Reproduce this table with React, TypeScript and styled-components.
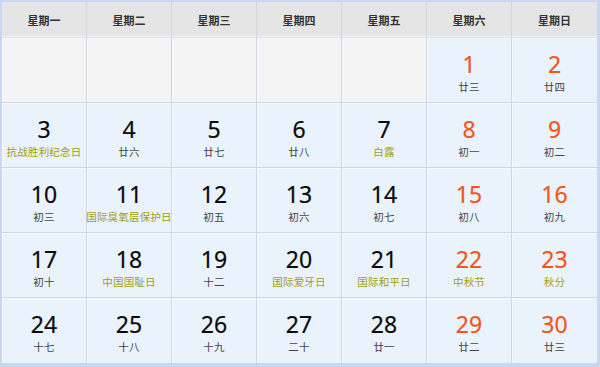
import React from 'react';
import styled, { createGlobalStyle } from 'styled-components';

const GlobalStyle = createGlobalStyle`
  html, body {
    margin: 0;
    padding: 0;
    background: #ffffff;
  }
  * {
    box-sizing: border-box;
  }
`;

const Calendar = styled('div')`
  width: 600px;
  height: 367px;
  display: grid;
  grid-template-columns: repeat(7, 85px);
  grid-template-rows: 36px repeat(5, 65px);
  border-style: solid;
  border-color: #cad8ef;
  border-width: 2px 3px 4px 2px;
  background: #eaf2fb;
  font-family: 'Noto Sans', 'Noto Sans CJK SC', sans-serif;
`;

const HeadCell = styled('div')<{ $last?: boolean }>`
  display: flex;
  align-items: center;
  justify-content: center;
  background: #e5e5e5;
  border-right: ${(props) => (props.$last ? 'none' : '1px solid #d3d8e0')};
  border-bottom: 1px solid #d6dde8;
  box-shadow: inset 0 -1px 0 #f2f4f8;
  color: #333333;
  font-size: 11px;
  font-weight: 700;
  font-family: 'Noto Sans CJK SC', sans-serif;
`;

const DayCell = styled('div')<{ $empty?: boolean; $last?: boolean; $bottom?: boolean }>`
  display: flex;
  flex-direction: column;
  align-items: center;
  justify-content: center;
  padding-top: 5px;
  background: ${(props) => (props.$empty ? '#f4f4f4' : '#eaf2fb')};
  border-right: ${(props) => (props.$last ? 'none' : '1px solid #cbd6e6')};
  border-bottom: ${(props) => (props.$bottom ? 'none' : '1px solid #cbd6e6')};
  box-shadow: inset 1px 1px 0 rgba(255, 255, 255, 0.7);
`;

const DayNumber = styled('span')<{ $weekend?: boolean }>`
  font-family: 'Noto Sans', sans-serif;
  font-size: 23px;
  line-height: 24px;
  -webkit-text-stroke: 0.2px currentColor;
  color: ${(props) => (props.$weekend ? '#f2561d' : '#0a0a0a')};
`;

const Lunar = styled('span')<{ $festival?: boolean }>`
  margin-top: 4px;
  font-family: 'Noto Sans CJK SC', sans-serif;
  font-size: 10.5px;
  line-height: 14px;
  letter-spacing: 0.2px;
  white-space: nowrap;
  color: ${(props) => (props.$festival ? '#a09e12' : '#444444')};
`;

type Day = { n: number; lunar: string; fest?: boolean } | null;

const weekdays = ['星期一', '星期二', '星期三', '星期四', '星期五', '星期六', '星期日'];

const days: Day[] = [
  null, null, null, null, null,
  { n: 1, lunar: '廿三' },
  { n: 2, lunar: '廿四' },
  { n: 3, lunar: '抗战胜利纪念日', fest: true },
  { n: 4, lunar: '廿六' },
  { n: 5, lunar: '廿七' },
  { n: 6, lunar: '廿八' },
  { n: 7, lunar: '白露', fest: true },
  { n: 8, lunar: '初一' },
  { n: 9, lunar: '初二' },
  { n: 10, lunar: '初三' },
  { n: 11, lunar: '国际臭氧层保护日', fest: true },
  { n: 12, lunar: '初五' },
  { n: 13, lunar: '初六' },
  { n: 14, lunar: '初七' },
  { n: 15, lunar: '初八' },
  { n: 16, lunar: '初九' },
  { n: 17, lunar: '初十' },
  { n: 18, lunar: '中国国耻日', fest: true },
  { n: 19, lunar: '十二' },
  { n: 20, lunar: '国际爱牙日', fest: true },
  { n: 21, lunar: '国际和平日', fest: true },
  { n: 22, lunar: '中秋节', fest: true },
  { n: 23, lunar: '秋分', fest: true },
  { n: 24, lunar: '十七' },
  { n: 25, lunar: '十八' },
  { n: 26, lunar: '十九' },
  { n: 27, lunar: '二十' },
  { n: 28, lunar: '廿一' },
  { n: 29, lunar: '廿二' },
  { n: 30, lunar: '廿三' },
];

export default function App() {
  return (
    <>
      <GlobalStyle />
      <Calendar>
        {weekdays.map((w, i) => (
          <HeadCell key={w} $last={i === 6}>
            {w}
          </HeadCell>
        ))}
        {days.map((d, i) => {
          const col = i % 7;
          const last = col === 6;
          const bottom = i >= 28;
          if (!d) return <DayCell key={i} $empty $last={last} $bottom={bottom} />;
          return (
            <DayCell key={i} $last={last} $bottom={bottom}>
              <DayNumber $weekend={col >= 5}>{d.n}</DayNumber>
              <Lunar $festival={d.fest}>{d.lunar}</Lunar>
            </DayCell>
          );
        })}
      </Calendar>
    </>
  );
}
